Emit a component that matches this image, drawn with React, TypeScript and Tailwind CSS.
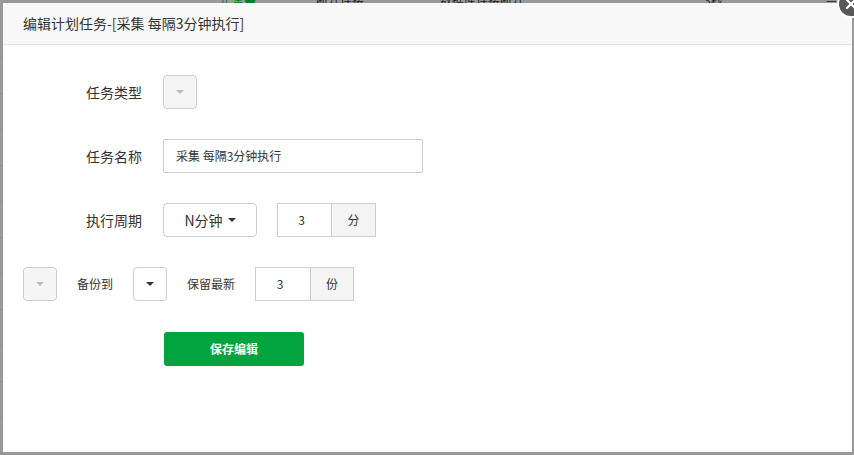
import React from "react";

const font = { fontFamily: '"Noto Sans CJK SC", "Noto Sans", sans-serif' };

function Caret({ light }: { light?: boolean }) {
  return (
    <span
      className={`inline-block w-0 h-0 border-x-[4px] border-x-transparent border-t-[4px] ${
        light ? "border-t-[#bbb]" : "border-t-[#333]"
      }`}
    />
  );
}

function SelectBox({ disabled }: { disabled?: boolean }) {
  return (
    <div
      className={`w-[34px] h-[34px] rounded-[4px] border border-[#ccc] flex items-center justify-center shrink-0 ${
        disabled ? "bg-[#f5f5f5]" : "bg-white"
      }`}
    >
      <Caret light={disabled} />
    </div>
  );
}

function InputGroup({ value, unit, inputW, unitW }: { value: string; unit: string; inputW: string; unitW: string }) {
  return (
    <div className="flex h-[34px] text-[12px] text-[#333] shrink-0">
      <div className={`${inputW} border border-[#ccc] border-r-0 flex items-center justify-center pr-[6px] bg-white`}>{value}</div>
      <div className={`${unitW} border border-[#ccc] bg-[#f5f5f5] flex items-center justify-center`}>{unit}</div>
    </div>
  );
}

export default function App() {
  return (
    <div className="relative w-[854px] h-[455px] bg-[#999] overflow-hidden" style={font}>
      {/* table behind the dialog */}
      <div className="absolute left-0 top-[-9px] w-full h-[14px] text-[12px] text-[#222]">
        <span className="absolute left-[220px] text-[#0a7d2c]">正常●</span>
        <span className="absolute left-[316px]">断开连接</span>
        <span className="absolute left-[440px]">数据库连接断开</span>
        <span className="absolute left-[704px]">3秒</span>
        <span className="absolute left-[826px]">—</span>
      </div>
      <div className="absolute left-0 top-[22px] w-[3px] flex flex-col">
        {Array.from({ length: 12 }).map((_, i) => (
          <div key={i} className="h-[36px] border-b border-[#8c8c8c]" />
        ))}
      </div>

      {/* dialog */}
      <div className="absolute left-[3px] top-[3px] w-[849px] h-[449px] bg-white">
        <div className="h-[42px] bg-[#f8f8f8] border-b border-[#e5e5e5] flex items-center pl-[20px] text-[14px] text-[#333]">
          编辑计划任务-[采集 每隔3分钟执行]
        </div>

        <div className="pt-[30px] flex flex-col gap-[30px]">
          <div className="flex items-center">
            <div className="w-[139px] text-right text-[14px] text-[#333]">任务类型</div>
            <div className="ml-[21px]">
              <SelectBox disabled />
            </div>
          </div>

          <div className="flex items-center">
            <div className="w-[139px] text-right text-[14px] text-[#333]">任务名称</div>
            <div className="ml-[21px] w-[260px] h-[34px] border border-[#ccc] rounded-[2px] flex items-center px-[12px] text-[12px] text-[#333]">
              采集 每隔3分钟执行
            </div>
          </div>

          <div className="flex items-center">
            <div className="w-[139px] text-right text-[14px] text-[#333]">执行周期</div>
            <div className="ml-[21px] flex items-center gap-[20px]">
              <div className="w-[94px] h-[34px] border border-[#ccc] rounded-[4px] flex items-center justify-center gap-[5px] text-[14px] text-[#333]">
                N分钟 <Caret />
              </div>
              <InputGroup value="3" unit="分" inputW="w-[54px]" unitW="w-[45px]" />
            </div>
          </div>

          <div className="flex items-center gap-[20px] pl-[20px] text-[12px] text-[#333]">
            <SelectBox disabled />
            <div className="w-[36px]">备份到</div>
            <SelectBox />
            <div className="w-[48px]">保留最新</div>
            <InputGroup value="3" unit="份" inputW="w-[55px]" unitW="w-[44px]" />
          </div>
        </div>

        <div className="pl-[161px] pt-[31px]">
          <button className="w-[140px] h-[34px] rounded-[3px] bg-[#02a43f] text-white text-[12px] font-bold">
            保存编辑
          </button>
        </div>
      </div>

      {/* close button */}
      <div className="absolute left-[837px] top-[-10px] w-[28px] h-[28px] rounded-full bg-[#595959] border-2 border-white flex items-center justify-center">
        <svg width="12" height="12" viewBox="0 0 12 12">
          <path d="M2 2 L10 10 M10 2 L2 10" stroke="white" strokeWidth="2.2" strokeLinecap="round" />
        </svg>
      </div>
    </div>
  );
}
